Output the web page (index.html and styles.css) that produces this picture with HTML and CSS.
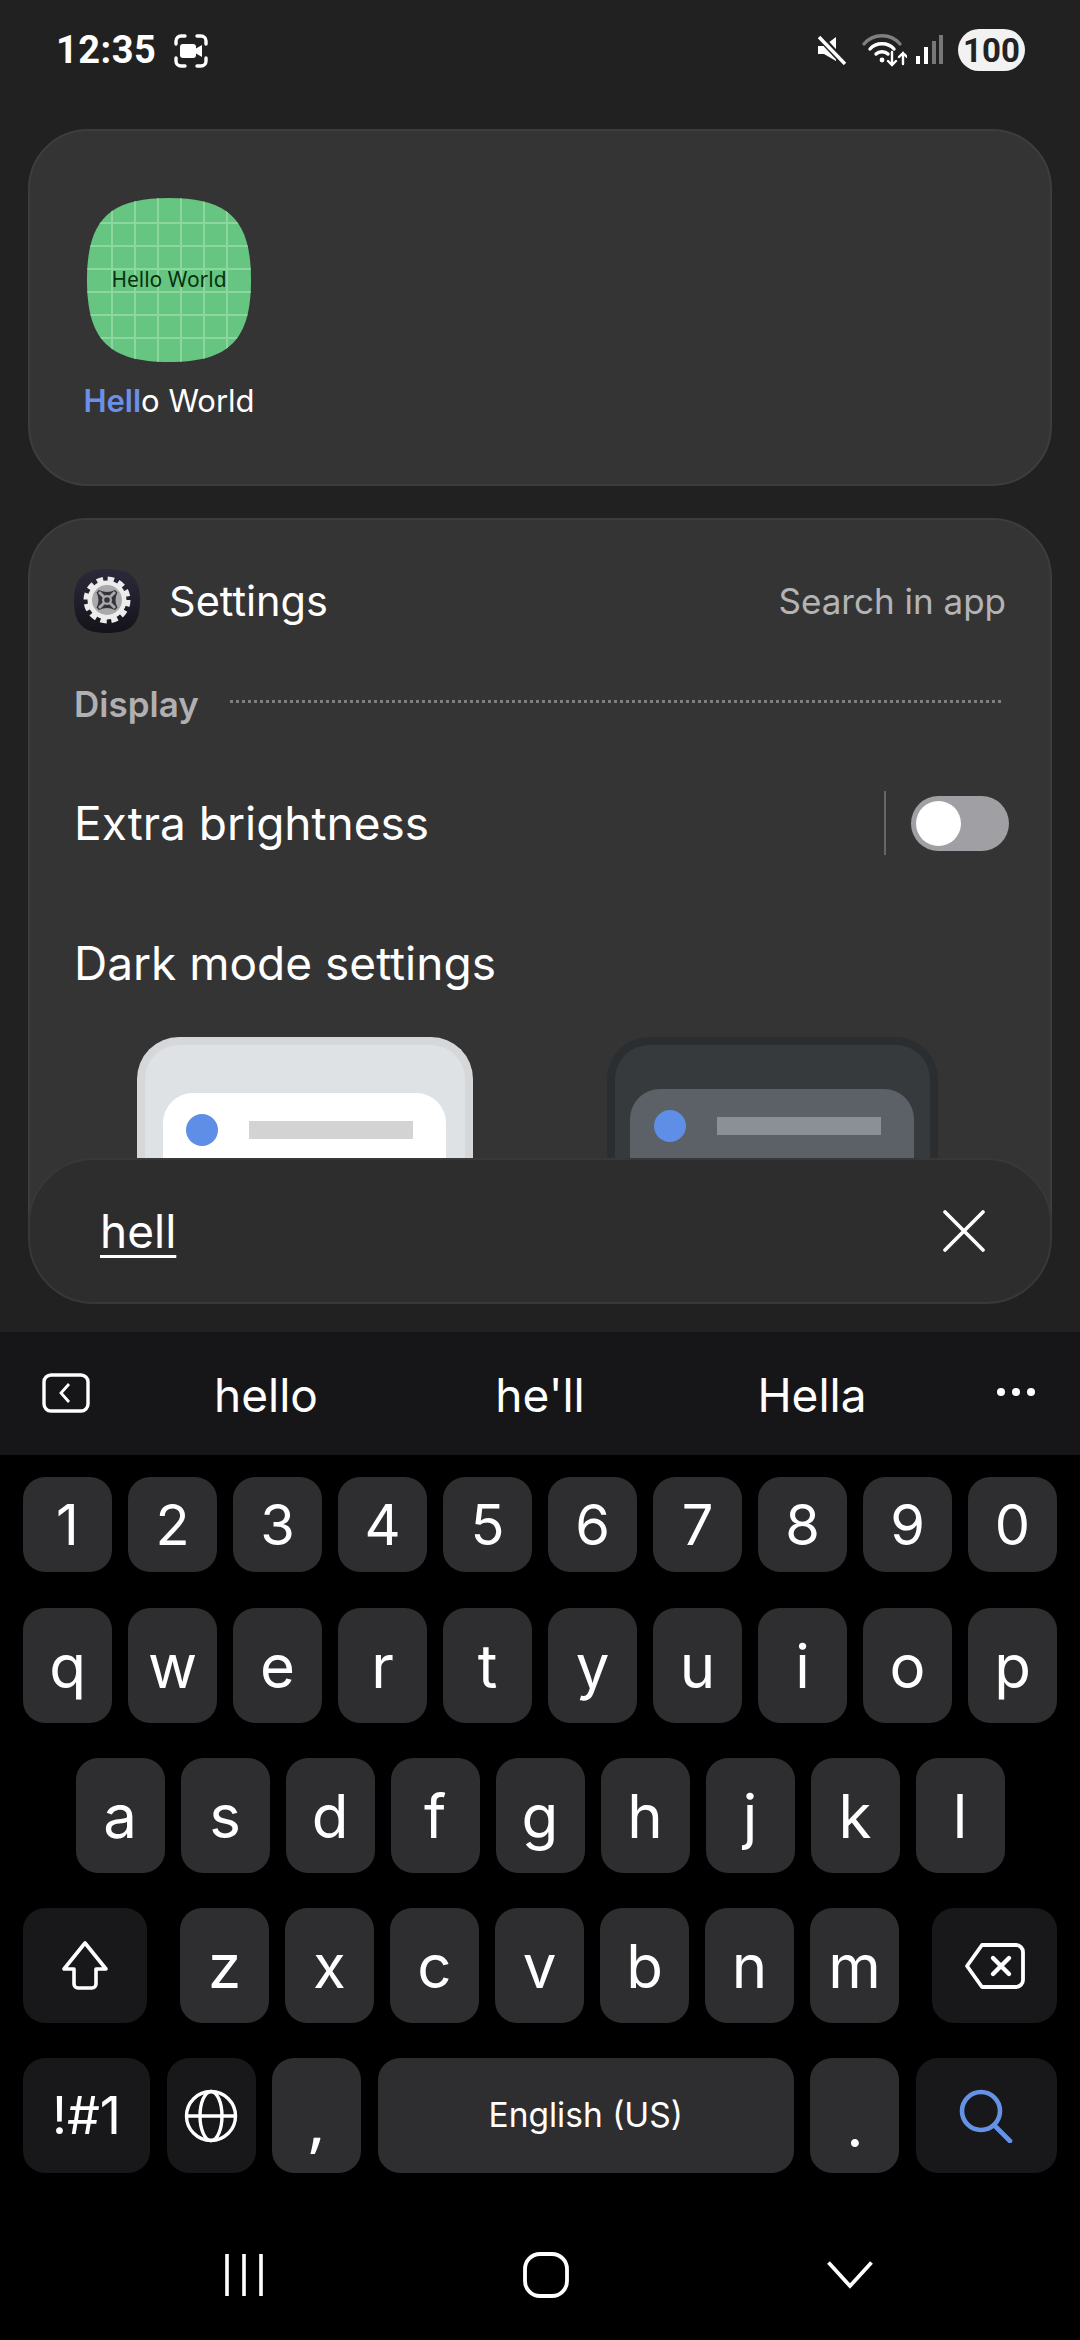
FILE: index.html
```html
<!DOCTYPE html>
<html lang="en">

<head>
    <meta charset="UTF-8">
    <meta name="viewport" content="width=device-width, initial-scale=1.0">
    <title>Finder search</title>
    <link rel="stylesheet" href="styles.css">
</head>

<body>
    <header class="statusBar">
        <div class="statusLeft">
            <span class="clock">12:35</span>
            <svg class="captureIcon" width="34" height="34" viewBox="0 0 34 34" fill="none" stroke="#fff" stroke-width="3.4" stroke-linecap="round">
                <path d="M2 10V7a5 5 0 0 1 5-5h4M23 2h4a5 5 0 0 1 5 5v3M32 24v3a5 5 0 0 1-5 5h-4M11 32H7a5 5 0 0 1-5-5v-3" />
                <rect x="6" y="10" width="16" height="14" rx="3" fill="#fff" stroke="none" />
                <path d="M22 14.500l6-3.500v12l-6-3.500z" fill="#fff" stroke="none" />
            </svg>
        </div>
        <div class="statusRight">
            <svg class="muteIcon" width="30" height="30" viewBox="0 0 30 30">
                <path d="M1 11h6L19 2v24L7 19H1z" fill="#fff" />
                <path d="M3 2l25 27" stroke="#212121" stroke-width="7" />
                <path d="M2 2l26 27" stroke="#fff" stroke-width="3.4" />
            </svg>
            <svg class="wifiIcon" width="46" height="34" viewBox="0 0 46 34" fill="none" stroke-linecap="round">
                <path d="M3 11C12 0 30 0 39 11" stroke="#7f7f7f" stroke-width="3.4" />
                <path d="M9 16C15 9 27 9 33 16" stroke="#fff" stroke-width="3.4" />
                <path d="M15 21C18 18 24 18 27 21" stroke="#fff" stroke-width="3.4" />
                <circle cx="21" cy="27" r="2.400" fill="#fff" />
                <path d="M31 19v13M27 28l4 4 4-4M42 31V20M38 24l4-4 4 4" stroke="#fff" stroke-width="2.400" />
            </svg>
            <svg class="signalIcon" width="27" height="30" viewBox="0 0 27 30">
                <rect x="0" y="21" width="4" height="8" fill="#fff" />
                <rect x="8" y="12" width="4" height="17" fill="#fff" />
                <rect x="16" y="6" width="4" height="23" fill="#777" />
                <rect x="23" y="0" width="4" height="29" fill="#777" />
            </svg>
            <span class="batteryPill">100</span>
        </div>
    </header>

    <main class="results">
        <section class="card appCard">
            <div class="appTile">
                <div class="appIcon"><span>Hello World</span></div>
                <div class="appName"><b>Hell</b>o World</div>
            </div>
        </section>

        <section class="card settingsCard">
            <div class="settingsHead">
                <svg class="gearIcon" width="66" height="64" viewBox="0 0 66 64">
                    <defs>
                        <linearGradient id="gearBack" x1="0" y1="0" x2="0" y2="1">
                            <stop offset="0" stop-color="#2c2a3a" />
                            <stop offset="1" stop-color="#14131a" />
                        </linearGradient>
                    </defs>
                    <path d="M33 0C56 0 66 8 66 32S56 64 33 64 0 56 0 32 10 0 33 0Z" fill="url(#gearBack)" />
                    <circle cx="33" cy="31" r="21" fill="none" stroke="#ececec" stroke-width="5" stroke-dasharray="6.4 4.6" />
                    <circle cx="33" cy="31" r="19.500" fill="#ececec" />
                    <circle cx="33" cy="31" r="15" fill="#a9a9ab" />
                    <path d="M25 21q8 4 16 0l2.500 2.500q-4 7.500 0 15l-2.500 2.500q-8-4-16 0l-2.500-2.500q4-7.500 0-15z" fill="#34343a" />
                    <path d="M25 23l16 16M41 23L25 39" stroke="#a9a9ab" stroke-width="3" />
                    <circle cx="33" cy="31" r="5" fill="#a9a9ab" />
                    <circle cx="33" cy="31" r="2.800" fill="#34343a" />
                </svg>
                <span class="settingsTitle">Settings</span>
                <span class="searchInApp">Search in app</span>
            </div>

            <div class="sectionRow">
                <span class="sectionName">Display</span>
                <span class="dots"></span>
            </div>

            <div class="optionRow">
                <span class="optionText">Extra brightness</span>
                <span class="divider"></span>
                <span class="toggle"><span class="knob"></span></span>
            </div>

            <div class="optionText darkTitle">Dark mode settings</div>

            <div class="previews">
                <div class="preview previewLight">
                    <div class="previewInner">
                        <span class="previewDot"></span>
                        <span class="previewBar"></span>
                    </div>
                </div>
                <div class="preview previewDark">
                    <div class="previewInner">
                        <span class="previewDot"></span>
                        <span class="previewBar"></span>
                    </div>
                </div>
            </div>
        </section>

        <div class="searchBar">
            <span class="searchText">hell</span>
            <svg width="42" height="42" viewBox="0 0 42 42" stroke="#fff" stroke-width="3.600" stroke-linecap="round">
                <path d="M2 2l38 38M40 2L2 40" />
            </svg>
        </div>
    </main>

    <div class="suggestBar">
        <svg class="collapseIcon" width="48" height="40" viewBox="0 0 48 40" fill="none" stroke="#fff" stroke-width="3.400">
            <rect x="2" y="2" width="44" height="36" rx="7" />
            <path d="M27 11l-8 9 8 9" stroke-width="2.800" />
        </svg>
        <span class="suggestion s1">hello</span>
        <span class="suggestion s2">he'll</span>
        <span class="suggestion s3">Hella</span>
        <svg class="moreIcon" width="40" height="10" viewBox="0 0 40 10" fill="#fff">
            <circle cx="5" cy="5" r="4" />
            <circle cx="20" cy="5" r="4" />
            <circle cx="35" cy="5" r="4" />
        </svg>
    </div>

    <div class="keyboard">
        <div class="keyRow numberRow">
            <span class="key">1</span><span class="key">2</span><span class="key">3</span><span class="key">4</span><span class="key">5</span>
            <span class="key">6</span><span class="key">7</span><span class="key">8</span><span class="key">9</span><span class="key">0</span>
        </div>
        <div class="keyRow">
            <span class="key">q</span><span class="key">w</span><span class="key">e</span><span class="key">r</span><span class="key">t</span>
            <span class="key">y</span><span class="key">u</span><span class="key">i</span><span class="key">o</span><span class="key">p</span>
        </div>
        <div class="keyRow homeRow">
            <span class="key">a</span><span class="key">s</span><span class="key">d</span><span class="key">f</span><span class="key">g</span>
            <span class="key">h</span><span class="key">j</span><span class="key">k</span><span class="key">l</span>
        </div>
        <div class="keyRow shiftRow">
            <span class="key fnKey shiftKey">
                <svg width="50" height="52" viewBox="0 0 50 52" fill="none" stroke="#fff" stroke-width="3.600" stroke-linejoin="round">
                    <path d="M25 3L4 29h10v15a4 4 0 0 0 4 4h14a4 4 0 0 0 4-4V29h10z" />
                </svg>
            </span>
            <span class="key">z</span><span class="key">x</span><span class="key">c</span><span class="key">v</span><span class="key">b</span>
            <span class="key">n</span><span class="key">m</span>
            <span class="key fnKey deleteKey">
                <svg width="60" height="46" viewBox="0 0 60 46" fill="none" stroke="#fff" stroke-width="3.800" stroke-linejoin="round" stroke-linecap="round">
                    <path d="M17 2h34a7 7 0 0 1 7 7v28a7 7 0 0 1-7 7H17L2 23z" />
                    <path d="M28 15l16 16M44 15L28 31" stroke-width="4.400" />
                </svg>
            </span>
        </div>
        <div class="keyRow bottomRow">
            <span class="key fnKey symKey">!#1</span>
            <span class="key fnKey globeKey">
                <svg width="54" height="54" viewBox="0 0 54 54" fill="none" stroke="#fff" stroke-width="3.400">
                    <circle cx="27" cy="27" r="24.500" />
                    <ellipse cx="27" cy="27" rx="11" ry="24.500" />
                    <path d="M3 27h48" />
                </svg>
            </span>
            <span class="key markKey commaKey">,</span>
            <span class="key spaceKey">English (US)</span>
            <span class="key markKey">.</span>
            <span class="key fnKey searchKey">
                <svg width="54" height="54" viewBox="0 0 54 54" fill="none" stroke="#6592e6" stroke-width="4.600" stroke-linecap="round">
                    <circle cx="22" cy="22" r="19" />
                    <path d="M35 36l16 16" />
                </svg>
            </span>
        </div>
    </div>

    <nav class="navBar">
        <svg width="40" height="42" viewBox="0 0 40 42" stroke="#fff" stroke-width="3.600">
            <path d="M3 0v42M20 0v42M37 0v42" />
        </svg>
        <svg width="46" height="46" viewBox="0 0 46 46" fill="none" stroke="#fff" stroke-width="3.800">
            <rect x="2" y="2" width="42" height="42" rx="15" />
        </svg>
        <svg width="46" height="28" viewBox="0 0 46 28" fill="none" stroke="#fff" stroke-width="3.800">
            <path d="M1.500 1.500L23 25 44.500 1.500" />
        </svg>
    </nav>
</body>

</html>
```

FILE: styles.css
```css
* {
    box-sizing: border-box;
}

html,
body {
    margin: 0;
    padding: 0;
}

body {
    width: 1080px;
    height: 2340px;
    overflow: hidden;
    display: flex;
    flex-direction: column;
    font-family: 'Inter', 'Roboto', sans-serif;
    color: #ffffff;
    background-color: #000000;
}

.statusBar {
    height: 129px;
    flex-shrink: 0;
    display: flex;
    justify-content: space-between;
    align-items: flex-start;
    padding: 29px 55px 0 56px;
    background-color: #212121;
}

.statusLeft,
.statusRight {
    display: flex;
    align-items: center;
    height: 42px;
}

.clock {
    font-family: 'Roboto', sans-serif;
    font-weight: 700;
    font-size: 38px;
    letter-spacing: 0.5px;
}

.captureIcon {
    margin-left: 18px;
    margin-top: 2px;
}

.muteIcon {
    margin-right: 14px;
}

.wifiIcon {
    margin-right: 9px;
}

.signalIcon {
    margin-right: 15px;
}

.batteryPill {
    width: 67px;
    height: 42px;
    border-radius: 21px;
    display: flex;
    align-items: center;
    justify-content: center;
    background-color: #f2f2f2;
    color: #222222;
    font-family: 'Roboto', sans-serif;
    font-weight: 700;
    font-size: 33px;
}

.results {
    position: relative;
    height: 1203px;
    flex-shrink: 0;
    padding: 0 28px;
    overflow: hidden;
    background-color: #212121;
}

.card {
    background-color: #343435;
    border: 2px solid #3d3d3e;
    border-radius: 60px;
}

.appCard {
    height: 357px;
    padding: 67px 0 0 54px;
}

.appTile {
    width: 170px;
    display: flex;
    flex-direction: column;
    align-items: center;
}

.appIcon {
    width: 164px;
    height: 164px;
    display: flex;
    align-items: center;
    justify-content: center;
    padding-bottom: 3px;
    color: #06320f;
    font-size: 21px;
    font-family: 'Noto Sans', sans-serif;
    background-color: #66c681;
    background-image:
        repeating-linear-gradient(90deg, transparent 0 1px, #8dd6a0 1px 3px, transparent 3px 23px),
        repeating-linear-gradient(180deg, transparent 0 1px, #8dd6a0 1px 3px, transparent 3px 23px);
    background-size: 138px 100%, 100% 138px;
    background-position: 23px 0, 0 23px;
    background-repeat: no-repeat;
    clip-path: path('M82 0C142 0 164 22 164 82C164 142 142 164 82 164C22 164 0 142 0 82C0 22 22 0 82 0Z');
}

.appName {
    margin-top: 20px;
    white-space: nowrap;
    font-size: 31px;
    line-height: 38px;
}

.appName b {
    font-weight: 600;
    color: #6b90ea;
}

.settingsCard {
    height: 760px;
    margin-top: 32px;
    padding: 48px 44px 0 44px;
    overflow: hidden;
}

.settingsHead {
    display: flex;
    align-items: center;
    height: 66px;
}

.settingsTitle {
    margin-left: 29px;
    font-size: 41.5px;
}

.searchInApp {
    margin-left: auto;
    font-size: 35px;
    color: #b4b4b6;
}

.sectionRow {
    display: flex;
    align-items: center;
    margin-top: 48px;
    height: 44px;
}

.sectionName {
    font-size: 35px;
    font-weight: 600;
    color: #b0b0b2;
}

.dots {
    flex: 1;
    height: 3px;
    margin: -6px 2px 0 31px;
    background-image: repeating-linear-gradient(90deg, #7f7f80 0 3px, transparent 3px 6px);
}

.optionRow {
    display: flex;
    align-items: center;
    height: 74px;
    margin-top: 60px;
}

.optionText {
    font-size: 46px;
    line-height: 54px;
}

.divider {
    width: 2px;
    height: 64px;
    margin-left: auto;
    background-color: #666668;
}

.toggle {
    width: 98px;
    height: 55px;
    margin-left: 25px;
    margin-right: -3px;
    padding: 5px 0 0 5px;
    border-radius: 28px;
    background-color: #a0a0a4;
}

.knob {
    display: block;
    width: 45px;
    height: 45px;
    border-radius: 50%;
    background-color: #ffffff;
}

.darkTitle {
    margin-top: 76px;
}

.previews {
    display: flex;
    margin-top: 47px;
    padding-left: 63px;
}

.preview {
    height: 200px;
    border-radius: 42px 42px 0 0;
}

.previewLight {
    width: 336px;
    background-color: #dfe2e4;
    border: 8px solid #d5d7d9;
    border-bottom: 0;
    padding: 48px 19px 0 18px;
}

.previewDark {
    margin-left: 134px;
    width: 331px;
    background-color: #363a3d;
    border: 8px solid #2b2e31;
    border-bottom: 0;
    padding: 44px 16px 0 15px;
}

.previewInner {
    height: 120px;
    display: flex;
    align-items: flex-start;
    padding: 21px 0 0 23px;
    border-radius: 30px 30px 0 0;
    background-color: #ffffff;
}

.previewDark .previewInner {
    background-color: #5b6166;
    padding-left: 24px;
}

.previewDot {
    width: 32px;
    height: 32px;
    border-radius: 50%;
    background-color: #5f8ee6;
}

.previewBar {
    width: 164px;
    height: 18px;
    margin: 7px 0 0 31px;
    background-color: #d3d3d3;
}

.previewDark .previewBar {
    background-color: #8a9096;
}

.searchBar {
    position: absolute;
    left: 28px;
    top: 1029px;
    width: 1024px;
    height: 146px;
    display: flex;
    align-items: center;
    justify-content: space-between;
    padding: 0 65px 0 70px;
    border: 2px solid #383839;
    border-radius: 66px;
    background-color: #2d2d2e;
}

.searchText {
    font-size: 46px;
    text-decoration: underline;
    text-decoration-thickness: 3px;
    text-underline-offset: 7px;
}

.suggestBar {
    position: relative;
    height: 123px;
    flex-shrink: 0;
    display: flex;
    align-items: center;
    padding: 0 44px 0 42px;
    background-color: #161618;
}

.collapseIcon {
    margin-top: -2px;
}

.suggestion {
    position: absolute;
    top: 36px;
    font-size: 46px;
    line-height: 54px;
    transform: translateX(-50%);
}

.s1 {
    left: 266px;
}

.s2 {
    left: 540px;
}

.s3 {
    left: 812px;
}

.moreIcon {
    margin-left: auto;
    margin-top: -4px;
}

.keyboard {
    display: flex;
    flex-direction: column;
    padding: 22px 23px 0;
}

.keyRow {
    display: flex;
    justify-content: center;
    gap: 16px;
    height: 115px;
    margin-bottom: 35px;
}

.numberRow {
    height: 95px;
    margin-bottom: 36px;
}

.key {
    width: 89px;
    flex-shrink: 0;
    display: flex;
    align-items: center;
    justify-content: center;
    border-radius: 22px;
    background-color: #2e2e30;
    font-size: 60px;
    line-height: 1;
}

.numberRow .key {
    font-size: 56px;
}

.fnKey {
    background-color: #18181a;
}

.shiftKey {
    width: 124px;
    margin-right: 17px;
}

.deleteKey {
    width: 125px;
    margin-left: 17px;
}

.bottomRow {
    margin-bottom: 0;
    justify-content: space-between;
    gap: 0;
}

.symKey {
    width: 127px;
    font-size: 52px;
}

.markKey {
    align-items: flex-end;
    padding-bottom: 18px;
}

.commaKey {
    font-family: 'Noto Sans', sans-serif;
    font-size: 66px;
    padding-bottom: 20px;
}

.spaceKey {
    width: 416px;
    font-size: 33.5px;
}

.searchKey {
    width: 141px;
}

.navBar {
    position: relative;
    flex: 1;
    display: flex;
    align-items: center;
    padding: 36px 207px 0 224px;
    justify-content: space-between;
}
```
